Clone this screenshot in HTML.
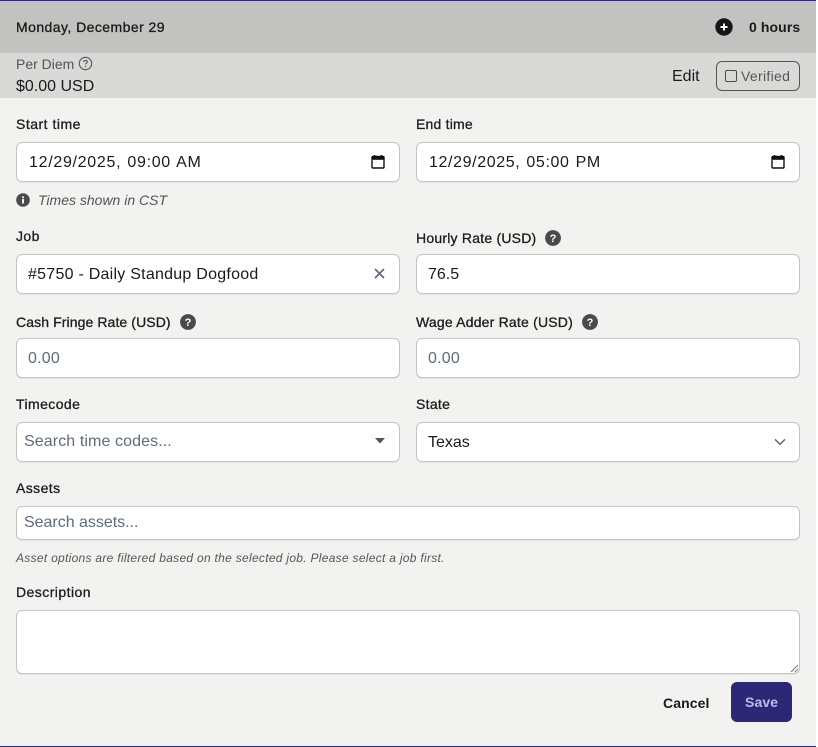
<!DOCTYPE html>
<html><head><meta charset="utf-8">
<style>
html,body{margin:0;padding:0;background:#fff;}
#p{position:relative;width:816px;height:747px;background:#f2f2f1;overflow:hidden;font-family:"Liberation Sans",sans-serif;color:#1a1a1a;}
#p>div,#p>svg{position:absolute;}
.t{white-space:nowrap;line-height:20px;}
.l{font-size:14px;font-weight:400;color:#1c1c1c;-webkit-text-stroke:.3px #1c1c1c;letter-spacing:.1px;}
.v{font-size:16px;color:#1a1a1a;}
.ph{font-size:16px;color:#5f6b7c;}
.i{background:#fff;border:1px solid #c4c4c3;border-radius:6px;box-sizing:border-box;box-shadow:0 1px 1px rgba(0,0,0,.06);}
</style></head><body>
<div id="p">
<div style="left:0;top:0;width:818px;height:1px;background:#2c2875"></div>
<div style="left:0;top:1px;width:816px;height:52px;background:#c2c2c0"></div>
<div style="left:0;top:53px;width:816px;height:45px;background:#d9d9d8"></div>
<div style="left:0;top:746px;width:818px;height:1px;background:#2c2875"></div>

<div class="t" style="left:16px;top:17px;font-size:14px;-webkit-text-stroke:.3px #1a1a1a;letter-spacing:.44px">Monday, December 29</div>
<svg style="left:715px;top:18px" width="18" height="18" viewBox="0 0 18 18"><circle cx="9" cy="9" r="8.7" fill="#161616"/><path d="M9 5.5v7M5.5 9h7" stroke="#fff" stroke-width="1.9"/></svg>
<div class="t" style="left:749px;top:17px;font-size:14px;font-weight:700;letter-spacing:.1px">0 hours</div>

<div class="t" style="left:16px;top:54px;font-size:14px;color:#555">Per Diem</div>
<svg style="left:78px;top:56px" width="15" height="15" viewBox="0 0 15 15"><circle cx="7.5" cy="7.5" r="6.2" fill="none" stroke="#555" stroke-width="1.1"/><path d="M5.7 6c0-1 .8-1.6 1.8-1.6s1.8.6 1.8 1.5c0 1.3-1.800 1.300-1.800 2.600" fill="none" stroke="#555" stroke-width="1.1"/><circle cx="7.5" cy="10.6" r=".7" fill="#555"/></svg>
<div class="t" style="left:16px;top:77px;font-size:16px;color:#1a1a1a">$0.00 USD</div>
<div class="t" style="left:672px;top:67px;font-size:16px;color:#1a1a1a">Edit</div>
<div style="left:716px;top:61px;width:84px;height:30px;box-sizing:border-box;border:1px solid #555;border-radius:6px"></div>
<div style="left:725px;top:70px;width:12px;height:12px;box-sizing:border-box;border:1px solid #4a4a4a;border-radius:2px"></div>
<div class="t" style="left:741px;top:66px;font-size:14px;color:#555;letter-spacing:.32px">Verified</div>

<div class="t l" style="left:16px;top:114px;letter-spacing:.5px">Start time</div>
<div class="i" style="left:16px;top:142px;width:384px;height:40px"></div>
<div class="t v" style="left:29px;top:153px;letter-spacing:.7px;word-spacing:1px">12/29/2025, 09:00 AM</div>
<svg style="left:371px;top:154px" width="14" height="16" viewBox="0 0 14 16"><path d="M3.5 1v2M10.500 1v2" stroke="#111" stroke-width="1.5"/><rect x="1" y="2.500" width="12" height="11.500" rx="1" fill="none" stroke="#111" stroke-width="1.4"/><rect x="1" y="2.500" width="12" height="3.300" fill="#111"/></svg>

<div class="t l" style="left:416px;top:114px;letter-spacing:.2px">End time</div>
<div class="i" style="left:416px;top:142px;width:384px;height:40px"></div>
<div class="t v" style="left:429px;top:153px;letter-spacing:.62px;word-spacing:1px">12/29/2025, 05:00 PM</div>
<svg style="left:771px;top:154px" width="14" height="16" viewBox="0 0 14 16"><path d="M3.5 1v2M10.500 1v2" stroke="#111" stroke-width="1.5"/><rect x="1" y="2.500" width="12" height="11.500" rx="1" fill="none" stroke="#111" stroke-width="1.4"/><rect x="1" y="2.500" width="12" height="3.300" fill="#111"/></svg>

<svg style="left:16px;top:193px" width="14" height="14" viewBox="0 0 14 14"><circle cx="7" cy="7" r="6.800" fill="#4a4a4a"/><rect x="6.100" y="6" width="1.800" height="4.500" fill="#fff"/><rect x="6.100" y="3.400" width="1.800" height="1.700" fill="#fff"/></svg>
<div class="t" style="left:38px;top:190px;font-size:14px;font-style:italic;color:#555">Times shown in CST</div>

<div class="t l" style="left:16px;top:226px;letter-spacing:.4px">Job</div>
<div class="i" style="left:16px;top:254px;width:384px;height:40px"></div>
<div class="t v" style="left:28px;top:265px;letter-spacing:.25px">#5750 - Daily Standup Dogfood</div>
<svg style="left:374px;top:268px" width="11" height="11" viewBox="0 0 11 11"><path d="M1 1l9 9M10 1l-9 9" stroke="#5f6b7c" stroke-width="1.700"/></svg>

<div class="t l" style="left:416px;top:228px;letter-spacing:.22px">Hourly Rate (USD)</div>
<svg style="left:545px;top:230px" width="16" height="16" viewBox="0 0 16 16"><circle cx="8" cy="8" r="7.900" fill="#4a4a4a"/><text x="8" y="11.800" text-anchor="middle" font-family="Liberation Sans" font-size="11" font-weight="700" fill="#fff">?</text></svg>
<div class="i" style="left:416px;top:254px;width:384px;height:40px"></div>
<div class="t v" style="left:428px;top:265px">76.5</div>

<div class="t l" style="left:16px;top:312px">Cash Fringe Rate (USD)</div>
<svg style="left:180px;top:314px" width="16" height="16" viewBox="0 0 16 16"><circle cx="8" cy="8" r="7.900" fill="#4a4a4a"/><text x="8" y="11.800" text-anchor="middle" font-family="Liberation Sans" font-size="11" font-weight="700" fill="#fff">?</text></svg>
<div class="i" style="left:16px;top:338px;width:384px;height:40px"></div>
<div class="t ph" style="left:28px;top:349px;letter-spacing:.2px">0.00</div>

<div class="t l" style="left:416px;top:312px;letter-spacing:.2px">Wage Adder Rate (USD)</div>
<svg style="left:582px;top:314px" width="16" height="16" viewBox="0 0 16 16"><circle cx="8" cy="8" r="7.900" fill="#4a4a4a"/><text x="8" y="11.800" text-anchor="middle" font-family="Liberation Sans" font-size="11" font-weight="700" fill="#fff">?</text></svg>
<div class="i" style="left:416px;top:338px;width:384px;height:40px"></div>
<div class="t ph" style="left:428px;top:349px;letter-spacing:.2px">0.00</div>

<div class="t l" style="left:16px;top:394px;letter-spacing:.42px">Timecode</div>
<div class="i" style="left:16px;top:422px;width:384px;height:40px"></div>
<div class="t ph" style="left:24px;top:432px;letter-spacing:.1px">Search time codes...</div>
<svg style="left:375px;top:438px" width="10" height="6" viewBox="0 0 10 6"><path d="M0 0h10L5 5.500z" fill="#4f5560"/></svg>

<div class="t l" style="left:416px;top:394px;letter-spacing:.3px">State</div>
<div class="i" style="left:416px;top:422px;width:384px;height:40px"></div>
<div class="t v" style="left:428px;top:433px">Texas</div>
<svg style="left:774px;top:438px" width="12" height="8" viewBox="0 0 12 8"><path d="M1 1.300l5 5 5-5" fill="none" stroke="#5f6b7c" stroke-width="1.500"/></svg>

<div class="t l" style="left:16px;top:478px;letter-spacing:.42px">Assets</div>
<div class="i" style="left:16px;top:506px;width:784px;height:34px"></div>
<div class="t ph" style="left:24px;top:513px;letter-spacing:-.02px">Search assets...</div>
<div class="t" style="left:16px;top:548px;font-size:12px;font-style:italic;color:#555;letter-spacing:.29px">Asset options are filtered based on the selected job. Please select a job first.</div>

<div class="t l" style="left:16px;top:582px;letter-spacing:.45px">Description</div>
<div class="i" style="left:16px;top:610px;width:784px;height:64px"></div>
<svg style="left:790px;top:664px" width="9" height="9" viewBox="0 0 9 9"><path d="M1 8l7-7M5 8l3-3" stroke="#777" stroke-width="1"/></svg>

<div class="t" style="left:663px;top:693px;font-size:14px;font-weight:700;color:#1a1a1a;letter-spacing:.1px">Cancel</div>
<div style="left:731px;top:682px;width:61px;height:40px;background:#2c2875;border-radius:6px"></div>
<div class="t" style="left:745px;top:692px;font-size:14px;font-weight:700;color:#bcbcec;letter-spacing:.1px">Save</div>
</div>
</body></html>
